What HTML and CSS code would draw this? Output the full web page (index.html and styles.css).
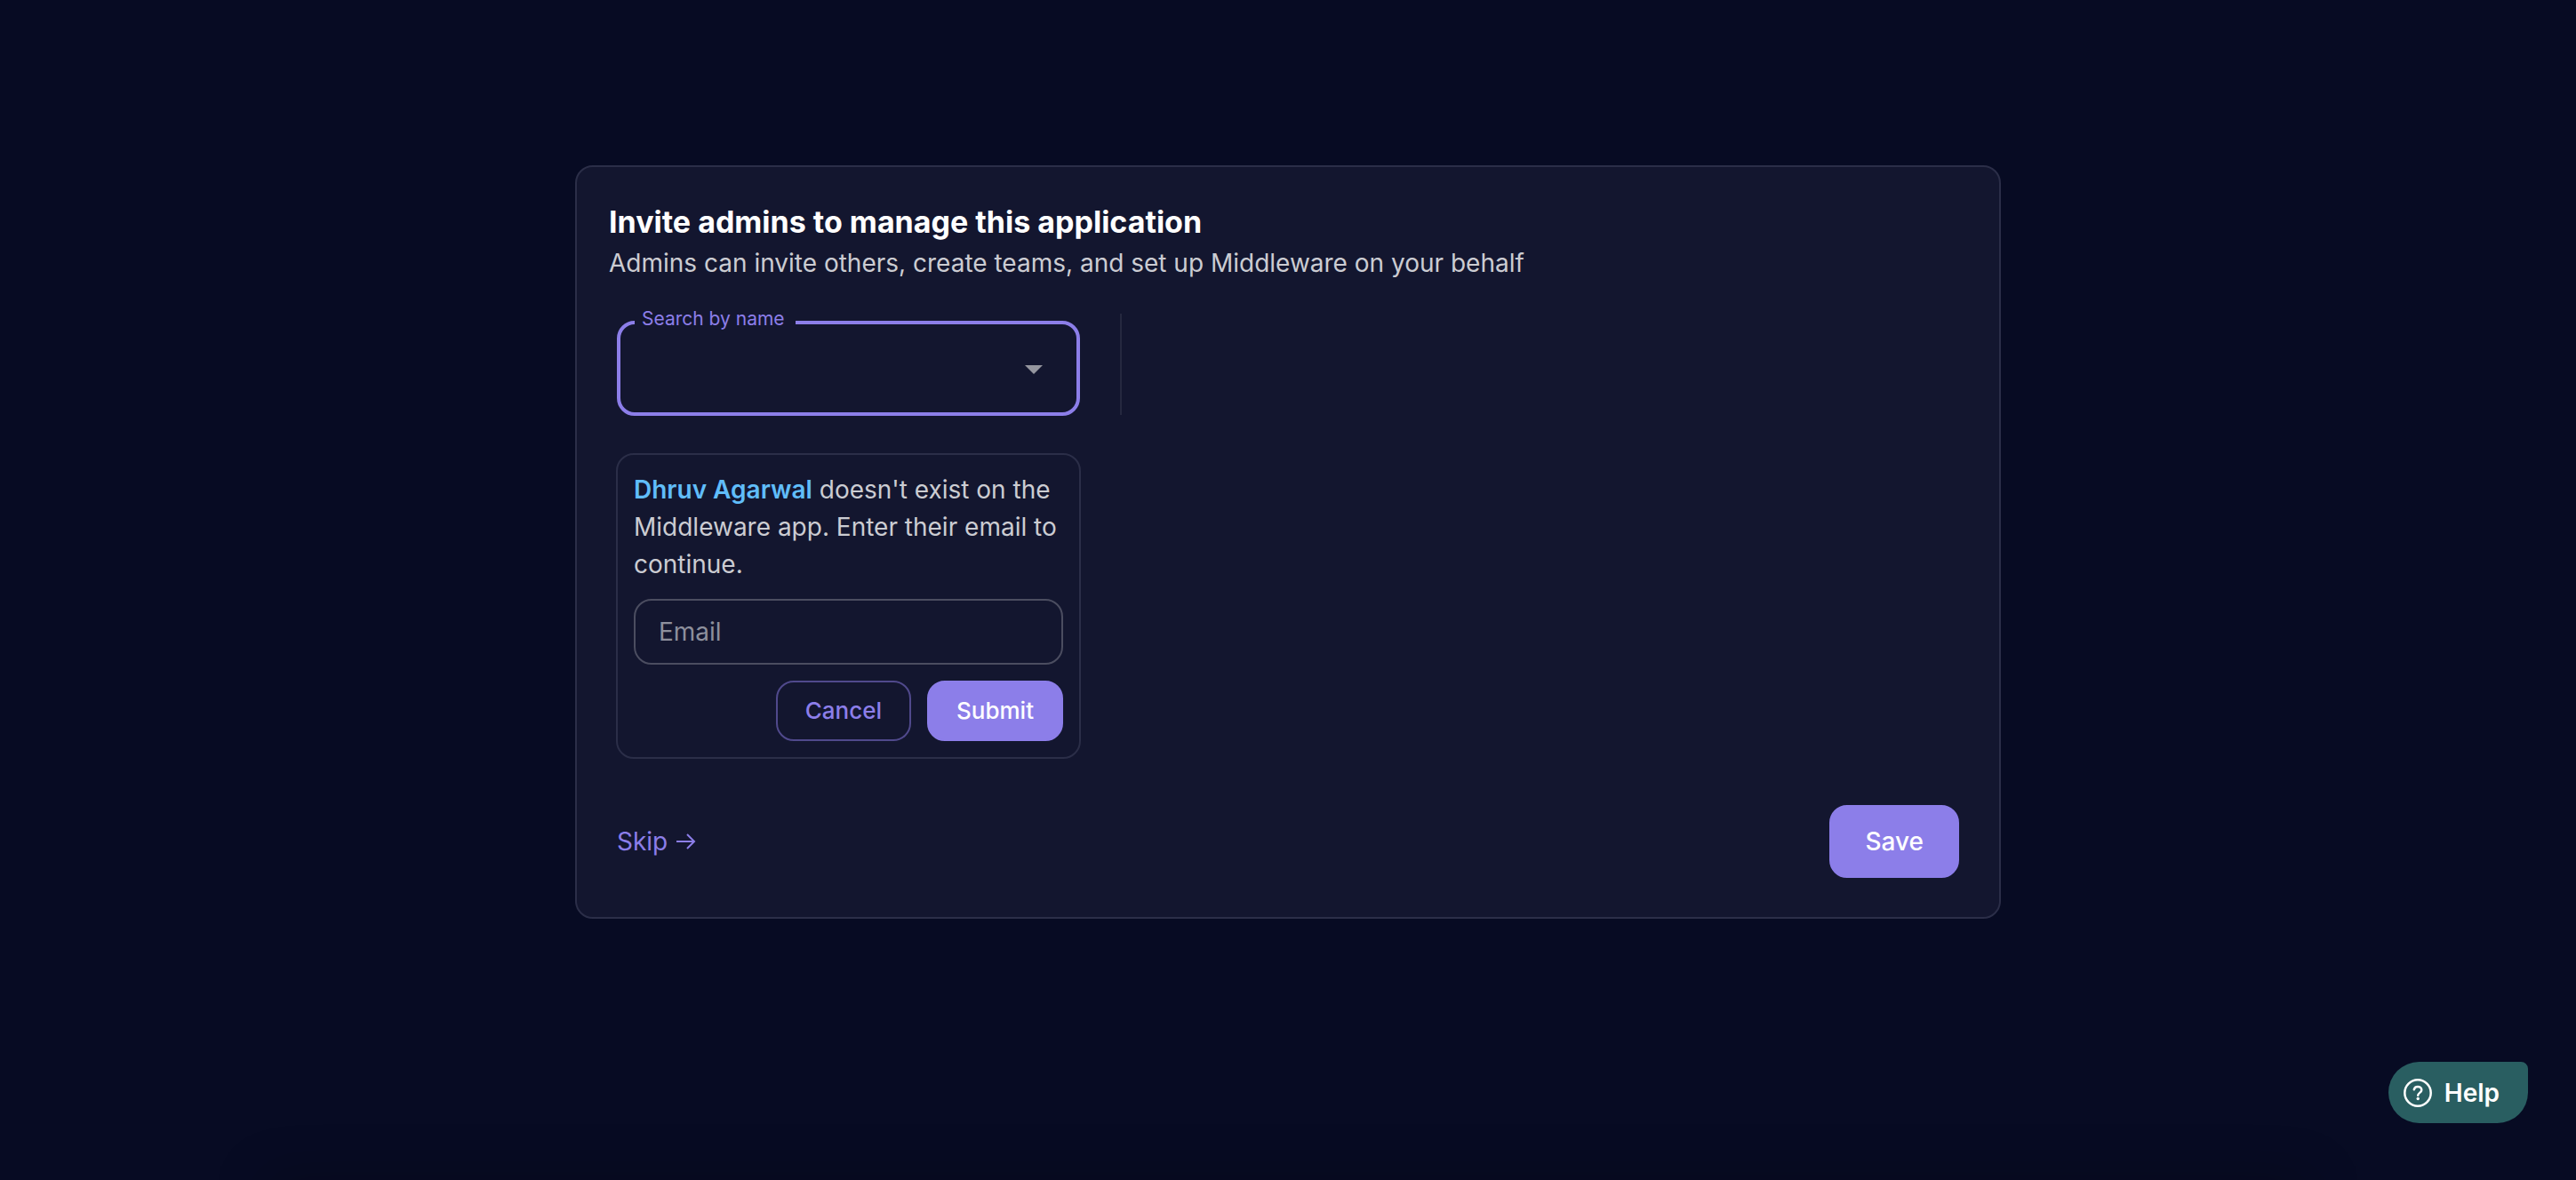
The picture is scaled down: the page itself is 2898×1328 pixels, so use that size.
FILE: index.html
```html
<!DOCTYPE html>
<html lang="en">
<head>
<meta charset="UTF-8" />
<meta name="viewport" content="width=device-width, initial-scale=1" />
<title>Invite admins</title>
<link rel="stylesheet" href="styles.css">
</head>
<body>
<main class="page">
  <section class="card">
    <header class="card-header">
      <h1>Invite admins to manage this application</h1>
      <p>Admins can invite others, create teams, and set up Middleware on your behalf</p>
    </header>

    <div class="members">
      <div class="member-column">
        <fieldset class="search">
          <legend><label for="search">Search by name</label></legend>
          <div class="search-row">
            <input type="text" id="search" role="combobox" aria-expanded="false" autocomplete="off" />
            <button type="button" class="search-toggle" aria-label="Open">
              <svg viewBox="0 0 20 10" width="20" height="10"><path d="M0 0h20L10 10z" fill="currentColor" /></svg>
            </button>
          </div>
        </fieldset>

        <form class="invite">
          <p><strong>Dhruv Agarwal</strong> doesn't exist on the Middleware app. Enter their email to continue.</p>
          <input type="email" class="email" placeholder="Email" aria-label="Email" />
          <div class="invite-actions">
            <button type="button" class="btn btn-outline">Cancel</button>
            <button type="submit" class="btn">Submit</button>
          </div>
        </form>
      </div>
      <div class="divider"></div>
    </div>

    <footer class="card-footer">
      <a href="#" class="skip">Skip
        <svg viewBox="0 0 22 18" width="22" height="18" fill="none" stroke="currentColor" stroke-width="2"><path d="M0 9h20M12 1l8 8-8 8" /></svg>
      </a>
      <button type="button" class="btn btn-large">Save</button>
    </footer>
  </section>
</main>

<button type="button" class="help">
  <svg viewBox="0 0 32 32" width="32" height="32" fill="none" stroke="currentColor" stroke-width="2.500" stroke-linecap="round">
    <circle cx="16" cy="16" r="14.700" />
    <path d="M11.800 12.300C12.200 10.200 13.900 9 16 9c2.400 0 4.300 1.500 4.300 3.700 0 3-4.100 3.300-4.100 6" />
    <circle cx="16.200" cy="22.500" r="1.700" fill="currentColor" stroke="none" />
  </svg>
  Help
</button>
</body>
</html>
```
FILE: styles.css
```css
:root {
  --page-bg: #070b23;
  --card-bg: #13162f;
  --card-border: #2b2e48;
  --field-border: #4b4d60;
  --primary: #8c7ee9;
  --primary-dim: #50498c;
  --text: #cbccd2;
  --muted: #8d8f9c;
  --info: #60bdfa;
  --help-bg: #295e61;
  --radius: 20px;
}

* {
  box-sizing: border-box;
}

body {
  margin: 0;
  min-height: 100vh;
  background: var(--page-bg);
  color: var(--text);
  font-family: Inter, "Noto Sans", sans-serif;
  font-size: 28px;
  line-height: 42px;
}

/* soft shade along the bottom edge of the window */
body::after {
  content: "";
  position: fixed;
  top: 100%;
  left: 300px;
  right: 300px;
  height: 40px;
  box-shadow: 0 0 60px rgba(0, 0, 0, 0.25);
}

h1,
p {
  margin: 0;
}

button,
input {
  font: inherit;
  color: inherit;
}

button {
  cursor: pointer;
}

.page {
  padding: 186px 40px 40px;
}

.card {
  max-width: 1604px;
  margin: 0 auto;
  padding: 37px 45px 44px 36px;
  background: var(--card-bg);
  border: 2px solid var(--card-border);
  border-radius: var(--radius);
}

.card-header h1 {
  color: #fff;
  font-size: 34px;
  font-weight: 700;
  line-height: 50px;
}

.members {
  display: flex;
  align-items: flex-start;
  gap: 44px;
  padding: 31px 0 0 8px;
}

.member-column {
  flex: 0 1 522px;
}

.search {
  min-width: 0;
  height: 120px;
  margin: 0 1px 42px;
  padding: 0 38px 0 16px;
  border: 4px solid var(--primary);
  border-radius: var(--radius);
}

.search legend {
  padding: 0 12px 8px 8px;
  color: var(--primary);
  font-size: 21px;
  line-height: 22px;
}

.search-row {
  display: flex;
  align-items: center;
  height: 76px;
}

.search input {
  flex: 1;
  min-width: 0;
  background: none;
  border: none;
  outline: none;
}

.search-toggle {
  display: flex;
  padding: 0;
  background: none;
  border: none;
  color: #95969f;
}

.divider {
  width: 2px;
  height: 114px;
  margin-top: 5px;
  background: #25283f;
}

.invite {
  display: flex;
  flex-direction: column;
  gap: 18px;
  padding: 18px;
  border: 2px solid var(--card-border);
  border-radius: var(--radius);
}

.invite strong {
  color: var(--info);
  font-weight: 600;
}

.email {
  width: 100%;
  height: 74px;
  padding: 0 26px;
  background: none;
  border: 2px solid var(--field-border);
  border-radius: var(--radius);
  outline: none;
}

.email::placeholder {
  color: var(--muted);
  opacity: 1;
}

.invite-actions {
  display: flex;
  justify-content: flex-end;
  gap: 18px;
}

.btn {
  padding: 11px 31px;
  background: var(--primary);
  border: 2px solid var(--primary);
  border-radius: var(--radius);
  color: #fff;
  font-size: 26px;
  font-weight: 500;
}

.btn-outline {
  background: none;
  border-color: var(--primary-dim);
  color: var(--primary);
}

.btn-large {
  padding: 18px 38px;
  font-size: 28px;
}

.card-footer {
  display: flex;
  align-items: center;
  justify-content: space-between;
  padding: 52px 0 0 9px;
}

.skip {
  display: flex;
  align-items: center;
  gap: 10px;
  color: var(--primary);
  text-decoration: none;
}

.help {
  position: fixed;
  right: 54px;
  bottom: 64px;
  display: flex;
  align-items: center;
  gap: 14px;
  height: 69px;
  padding: 0 32px 0 17px;
  background: var(--help-bg);
  border: none;
  border-radius: 35px 8px 35px 35px;
  color: #fff;
  font-weight: 600;
}
```
